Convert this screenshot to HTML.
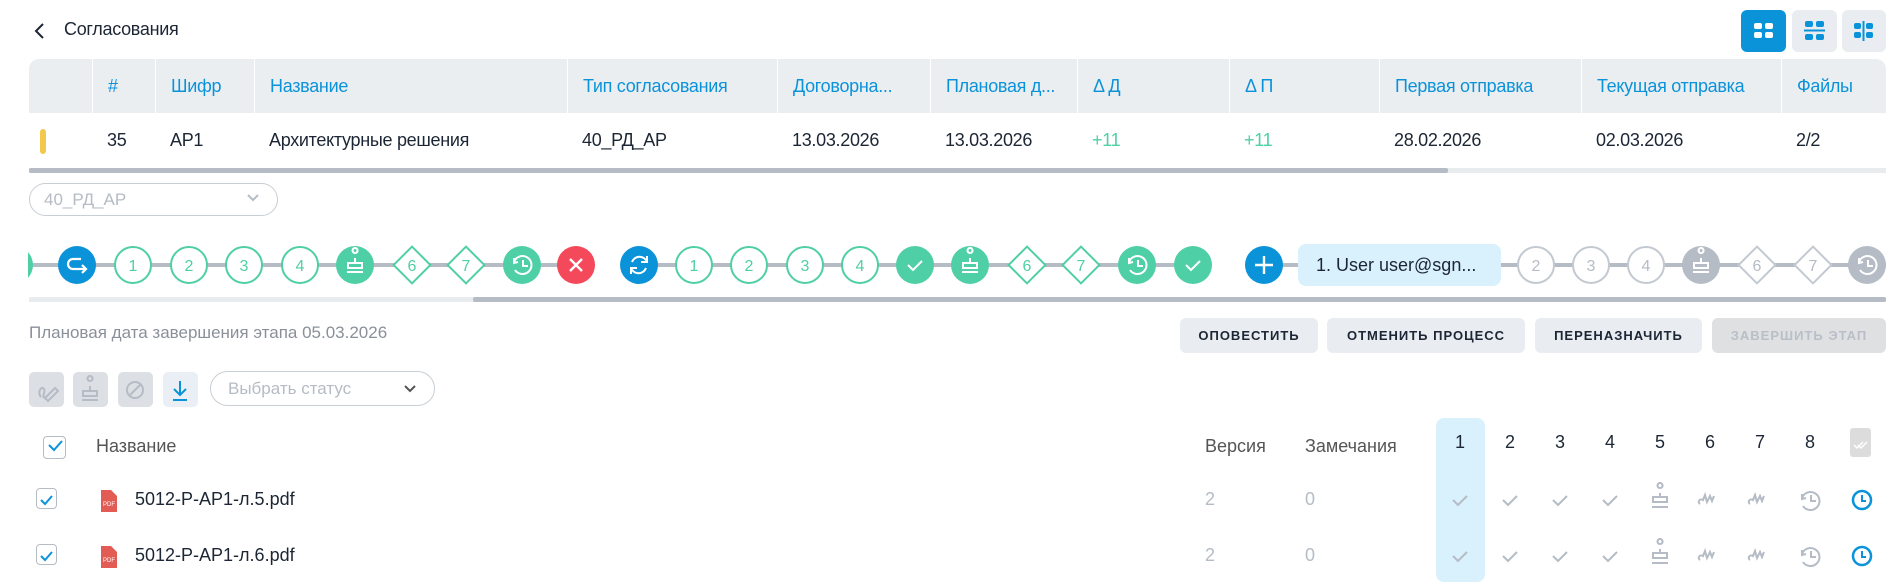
<!DOCTYPE html>
<html><head><meta charset="utf-8"><style>
*{box-sizing:border-box;margin:0;padding:0}
body{width:1903px;height:582px;overflow:hidden;background:#fff;font-family:"Liberation Sans","Noto Sans CJK SC",sans-serif;color:#1c2634;position:relative}
.a{position:absolute;white-space:nowrap}
.th{position:absolute;top:59px;height:54px;line-height:54px;color:#0b93d9;font-size:18px;padding-left:15px;border-left:1px solid #fff;letter-spacing:-0.3px}
.td{position:absolute;top:113px;height:55px;line-height:55px;font-size:18px;padding-left:15px;letter-spacing:-0.3px}
.btn{position:absolute;top:318px;height:35px;line-height:35px;background:#e9ecf0;border-radius:6px;font-size:13px;font-weight:bold;text-align:center;letter-spacing:1px;color:#1c2634}
.tb{position:absolute;top:372px;width:35px;height:35px;border-radius:5px;background:#dcdfe3}
.cb{position:absolute;width:21px;height:21px;border:1.5px solid #b5bcc5;border-radius:4px}
.num{position:absolute;top:432px;font-size:18px;width:40px;text-align:center}
</style></head><body>
<svg class="a" style="left:33px;top:22px" width="14" height="18"><path d="M10 2 L3 9 L10 16" stroke="#1c2634" stroke-width="2" fill="none"/></svg>
<div class="a" style="left:64px;top:19px;font-size:18px;letter-spacing:-0.3px">Согласования</div>
<div class="a" style="left:1741px;top:10px;width:45px;height:42px;border-radius:6px;background:#0b93d9"></div>
<div class="a" style="left:1792px;top:10px;width:45px;height:42px;border-radius:6px;background:#e9ecf0"></div>
<div class="a" style="left:1842px;top:10px;width:44px;height:42px;border-radius:6px;background:#e9ecf0"></div>
<svg class="a" style="left:1741px;top:10px" width="150" height="42">
<g fill="#fff"><rect x="13" y="13" width="8" height="6" rx="2"/><rect x="24" y="13" width="8" height="6" rx="2"/><rect x="13" y="22" width="8" height="6" rx="2"/><rect x="24" y="22" width="8" height="6" rx="2"/></g>
<g fill="#0b93d9"><rect x="64" y="11" width="8" height="6" rx="2"/><rect x="75" y="11" width="8" height="6" rx="2"/><rect x="64" y="24" width="8" height="6" rx="2"/><rect x="75" y="24" width="8" height="6" rx="2"/><rect x="63" y="19.5" width="21" height="2"/>
<rect x="113" y="13" width="7" height="6" rx="2"/><rect x="113" y="22" width="7" height="6" rx="2"/><rect x="125" y="13" width="7" height="6" rx="2"/><rect x="125" y="22" width="7" height="6" rx="2"/><rect x="121.5" y="11" width="2" height="20"/></g></svg>
<div class="a" style="left:29px;top:59px;width:1857px;height:54px;background:#ebeef1;border-radius:10px 10px 0 0"></div>
<div class="th" style="left:92px">#</div><div class="th" style="left:155px">Шифр</div><div class="th" style="left:254px">Название</div><div class="th" style="left:567px">Тип согласования</div><div class="th" style="left:777px">Договорна...</div><div class="th" style="left:930px">Плановая д...</div><div class="th" style="left:1077px">Δ Д</div><div class="th" style="left:1229px">Δ П</div><div class="th" style="left:1379px">Первая отправка</div><div class="th" style="left:1581px">Текущая отправка</div><div class="th" style="left:1781px">Файлы</div>
<div class="a" style="left:40px;top:129px;width:6px;height:25px;border-radius:3px;background:#f2c94c"></div>
<div class="td" style="left:92px">35</div><div class="td" style="left:155px">АР1</div><div class="td" style="left:254px">Архитектурные решения</div><div class="td" style="left:567px">40_РД_АР</div><div class="td" style="left:777px">13.03.2026</div><div class="td" style="left:930px">13.03.2026</div><div class="td" style="left:1077px;color:#4fcfa6">+11</div><div class="td" style="left:1229px;color:#4fcfa6">+11</div><div class="td" style="left:1379px">28.02.2026</div><div class="td" style="left:1581px">02.03.2026</div><div class="td" style="left:1781px">2/2</div>
<div class="a" style="left:29px;top:168px;width:1857px;height:5px;background:#e9ecef"></div>
<div class="a" style="left:29px;top:168px;width:1419px;height:5px;background:#b5bcc5;border-radius:2px"></div>
<div class="a" style="left:29px;top:183px;width:249px;height:33px;border:1px solid #c8ced5;border-radius:17px;color:#b5bcc5;font-size:17px;line-height:31px;padding-left:14px">40_РД_АР</div>
<svg class="a" style="left:246px;top:193px" width="14" height="10"><path d="M2 2 L7 7 L12 2" stroke="#b5bcc5" stroke-width="2" fill="none"/></svg>
<div class="a" style="left:28px;top:240px;width:1858px;height:52px;overflow:hidden">
<svg class="a" style="left:-28px;top:0" width="1903" height="52" font-family="Liberation Sans" font-size="16">
<g stroke="#b5bcc5" stroke-width="4"><line x1="0" y1="25" x2="576" y2="25"/><line x1="639" y1="25" x2="1193" y2="25"/><line x1="1264" y1="25" x2="1903" y2="25"/></g>
<circle cx="14" cy="25" r="19" fill="#4fcfa6"/>
<circle cx="77" cy="25" r="19" fill="#0b93d9"/><path d="M81 19 H73 a5 5 0 0 0 0 10 H86 M82 25 l4 4 l-4 4" stroke="#fff" stroke-width="2.2" fill="none"/>
<g fill="#fff" stroke="#4fcfa6" stroke-width="2"><circle cx="133" cy="25" r="18"/><circle cx="189" cy="25" r="18"/><circle cx="244" cy="25" r="18"/><circle cx="300" cy="25" r="18"/>
<circle cx="694" cy="25" r="18"/><circle cx="749" cy="25" r="18"/><circle cx="805" cy="25" r="18"/><circle cx="860" cy="25" r="18"/>
<rect x="399" y="12" width="26" height="26" transform="rotate(45 412 25)"/><rect x="453" y="12" width="26" height="26" transform="rotate(45 466 25)"/>
<rect x="1014" y="12" width="26" height="26" transform="rotate(45 1027 25)"/><rect x="1068" y="12" width="26" height="26" transform="rotate(45 1081 25)"/></g>
<g fill="#4fcfa6" text-anchor="middle"><text x="133" y="31">1</text><text x="189" y="31">2</text><text x="244" y="31">3</text><text x="300" y="31">4</text><text x="412" y="31">6</text><text x="466" y="31">7</text>
<text x="694" y="31">1</text><text x="749" y="31">2</text><text x="805" y="31">3</text><text x="860" y="31">4</text><text x="1027" y="31">6</text><text x="1081" y="31">7</text></g>
<g fill="#4fcfa6"><circle cx="355" cy="25" r="19"/><circle cx="522" cy="25" r="19"/><circle cx="915" cy="25" r="19"/><circle cx="970" cy="25" r="19"/><circle cx="1137" cy="25" r="19"/><circle cx="1193" cy="25" r="19"/></g>
<g stroke="#fff" stroke-width="2" fill="none">
<path d="M355 13 a2.5 2.5 0 1 1 0.1 0 M355 18 v5 M348 23 h14 v5 h-14 z M347 32 h16"/>
<path d="M970 13 a2.5 2.5 0 1 1 0.1 0 M970 18 v5 M963 23 h14 v5 h-14 z M962 32 h16"/>
<path d="M515 30 a9 9 0 1 0 -1 -8 M514 18 l0 5 l4 -1 M523 20 v6 h5"/>
<path d="M1130 30 a9 9 0 1 0 -1 -8 M1129 18 l0 5 l4 -1 M1138 20 v6 h5"/>
<path d="M908 25 l5 5 l9 -9"/><path d="M1186 25 l5 5 l9 -9"/></g>
<circle cx="576" cy="25" r="19" fill="#f4495b"/><path d="M570 19 l12 12 M582 19 l-12 12" stroke="#fff" stroke-width="2.4"/>
<circle cx="639" cy="25" r="19" fill="#0b93d9"/><path d="M647 22 a8 8 0 0 0 -15 0 M631 28 a8 8 0 0 0 15 0 M647 16 v6 h-6 M631 34 v-6 h6" stroke="#fff" stroke-width="2" fill="none"/>
<circle cx="1264" cy="25" r="19" fill="#0b93d9"/><path d="M1264 16 v18 M1255 25 h18" stroke="#fff" stroke-width="2.4"/>
<rect x="1298" y="4" width="203" height="42" rx="8" fill="#d9f1fd"/><text x="1316" y="31" font-size="18" fill="#1c2634">1. User user@sgn...</text>
<g fill="#fff" stroke="#c3c9d0" stroke-width="2"><circle cx="1536" cy="25" r="18"/><circle cx="1591" cy="25" r="18"/><circle cx="1646" cy="25" r="18"/>
<rect x="1744" y="12" width="26" height="26" transform="rotate(45 1757 25)"/><rect x="1800" y="12" width="26" height="26" transform="rotate(45 1813 25)"/></g>
<g fill="#b5bcc5" text-anchor="middle"><text x="1536" y="31">2</text><text x="1591" y="31">3</text><text x="1646" y="31">4</text><text x="1757" y="31">6</text><text x="1813" y="31">7</text></g>
<circle cx="1701" cy="25" r="19" fill="#b5bcc5"/><path d="M1701 13 a2.5 2.5 0 1 1 0.1 0 M1701 18 v5 M1694 23 h14 v5 h-14 z M1693 32 h16" stroke="#fff" stroke-width="2" fill="none"/>
<circle cx="1867" cy="25" r="19" fill="#b5bcc5"/><path d="M1860 30 a9 9 0 1 0 -1 -8 M1859 18 l0 5 l4 -1 M1868 20 v6 h5" stroke="#fff" stroke-width="2" fill="none"/>
</svg></div>
<div class="a" style="left:29px;top:297px;width:1857px;height:5px;background:#e9ecef"></div>
<div class="a" style="left:473px;top:297px;width:1413px;height:5px;background:#b5bcc5;border-radius:2px"></div>
<div class="a" style="left:29px;top:323px;font-size:17px;color:#8a9099">Плановая дата завершения этапа 05.03.2026</div>
<div class="btn" style="left:1180px;width:138px">ОПОВЕСТИТЬ</div>
<div class="btn" style="left:1327px;width:198px">ОТМЕНИТЬ ПРОЦЕСС</div>
<div class="btn" style="left:1535px;width:167px">ПЕРЕНАЗНАЧИТЬ</div>
<div class="btn" style="left:1712px;width:174px;background:#dfe0e2;color:#b8bfc8">ЗАВЕРШИТЬ ЭТАП</div>
<div class="tb" style="left:29px"></div><div class="tb" style="left:73px"></div><div class="tb" style="left:118px"></div><div class="tb" style="left:163px;background:#e9eff4"></div>
<svg class="a" style="left:29px;top:372px" width="175" height="35" fill="none" stroke-width="2">
<path d="M12 25 c-4 -4 0 -12 3 -8 c2 3 -3 8 1 9 M16 26 l10 -10 l3 3 l-10 10 z" stroke="#b5bcc5"/>
<path d="M61 9 a2.5 2.5 0 1 1 0.1 0 M61 14 v5 M54 19 h14 v5 h-14 z M53 28 h16" stroke="#b5bcc5"/>
<circle cx="106" cy="18" r="8" stroke="#b5bcc5"/><path d="M100 24 l12 -12" stroke="#b5bcc5"/>
<path d="M151 9 v14 M145 17 l6 6 l6 -6 M144 28 h14" stroke="#0b93d9"/></svg>
<div class="a" style="left:210px;top:371px;width:225px;height:35px;border:1px solid #c8ced5;border-radius:18px;color:#b5bcc5;font-size:17px;line-height:33px;padding-left:17px">Выбрать статус</div>
<svg class="a" style="left:403px;top:384px" width="14" height="10"><path d="M2 2 L7 7 L12 2" stroke="#555" stroke-width="2" fill="none"/></svg>
<div class="a" style="left:1436px;top:418px;width:49px;height:164px;background:#d9f1fd;border-radius:8px"></div>
<div class="cb" style="left:43px;top:436px;width:23px;height:23px"></div>
<div class="a" style="left:96px;top:436px;font-size:18px;color:#555">Название</div>
<div class="a" style="left:1205px;top:436px;font-size:18px;color:#555">Версия</div>
<div class="a" style="left:1305px;top:436px;font-size:18px;color:#555">Замечания</div>
<div class="num" style="left:1440px">1</div><div class="num" style="left:1490px">2</div><div class="num" style="left:1540px">3</div><div class="num" style="left:1590px">4</div><div class="num" style="left:1640px">5</div><div class="num" style="left:1690px">6</div><div class="num" style="left:1740px">7</div><div class="num" style="left:1790px">8</div>
<div class="a" style="left:1850px;top:428px;width:21px;height:29px;background:#dcdcdc;border-radius:3px"></div>
<div class="cb" style="left:36px;top:488px"></div><div class="cb" style="left:36px;top:544px"></div>
<svg class="a" style="left:0;top:420px" width="1903" height="162" fill="none" stroke-width="2">
<path d="M49 25 l5 5 l8 -9" stroke="#0b93d9"/><path d="M41 80 l4 4 l7 -8" stroke="#0b93d9"/><path d="M41 136 l4 4 l7 -8" stroke="#0b93d9"/>
<path d="M1854 25 l3 3 l6 -6 M1858 25 l3 3 l6 -6" stroke="#fff" stroke-width="1.5"/>
<g id="r" stroke="#b5bcc5"><path d="M1453 80 l5 5 l9 -9 M1503 80 l5 5 l9 -9 M1553 80 l5 5 l9 -9 M1603 80 l5 5 l9 -9"/>
<path d="M1660 68 a2.5 2.5 0 1 1 0.1 0 M1660 73 v4 M1653 77 h14 v5 h-14 z M1652 87 h16"/>
<path d="M1700 84 c-3 -2 0 -6 3 -4 l2 -5 l2 7 l3 -6 l2 5 l2 -5 M1750 84 c-3 -2 0 -6 3 -4 l2 -5 l2 7 l3 -6 l2 5 l2 -5"/>
<path d="M1803 86 a9 9 0 1 0 -1 -8 M1802 74 l0 5 l4 -1 M1811 75 v6 h5"/></g>
<use href="#r" y="56"/>
<circle cx="1862" cy="80" r="9" stroke="#0b93d9" stroke-width="2.5"/><path d="M1862 75 v6 h4" stroke="#0b93d9"/>
<circle cx="1862" cy="136" r="9" stroke="#0b93d9" stroke-width="2.5"/><path d="M1862 131 v6 h4" stroke="#0b93d9"/>
<path d="M101 70 h10 l6 6 v16 h-16 z" fill="#e35b55" stroke="none"/><path d="M101 126 h10 l6 6 v16 h-16 z" fill="#e35b55" stroke="none"/>
<text x="103" y="86" font-size="6" fill="#fff" stroke="none" font-family="Liberation Sans">PDF</text><text x="103" y="142" font-size="6" fill="#fff" stroke="none" font-family="Liberation Sans">PDF</text>
</svg>
<div class="a" style="left:135px;top:489px;font-size:18px">5012-Р-АР1-л.5.pdf</div>
<div class="a" style="left:135px;top:545px;font-size:18px">5012-Р-АР1-л.6.pdf</div>
<div class="a" style="left:1205px;top:489px;font-size:18px;color:#b5bcc5">2</div><div class="a" style="left:1305px;top:489px;font-size:18px;color:#b5bcc5">0</div>
<div class="a" style="left:1205px;top:545px;font-size:18px;color:#b5bcc5">2</div><div class="a" style="left:1305px;top:545px;font-size:18px;color:#b5bcc5">0</div>
</body></html>
